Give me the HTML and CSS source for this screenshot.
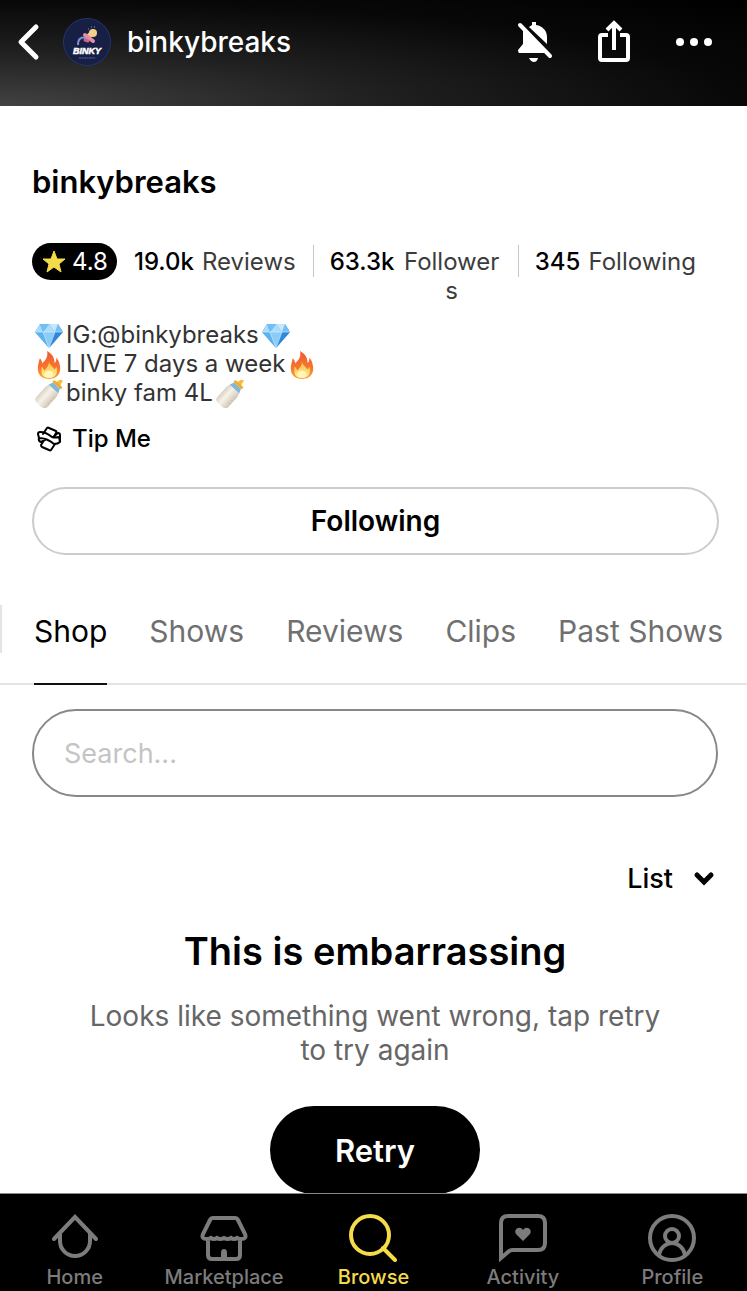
FILE: index.html
```html
<!DOCTYPE html>
<html lang="en">
<head>
<meta charset="utf-8">
<meta name="viewport" content="width=device-width, initial-scale=1">
<title>binkybreaks</title>
<link rel="stylesheet" href="styles.css">
</head>
<body>
<svg class="symbols" aria-hidden="true">
  <defs>
    <linearGradient id="flame" x1="0" y1="0" x2="0" y2="1"><stop offset="0" stop-color="#ee5a32"/><stop offset=".6" stop-color="#f8752e"/><stop offset="1" stop-color="#fda63a"/></linearGradient>
    <linearGradient id="core" x1="0" y1="0" x2="0" y2="1"><stop offset="0" stop-color="#ffb938"/><stop offset="1" stop-color="#fff3a0"/></linearGradient>
    <linearGradient id="milk" x1="0" y1="0" x2="1" y2="0"><stop offset="0" stop-color="#d9d0c2"/><stop offset=".4" stop-color="#f7f2e8"/><stop offset="1" stop-color="#d2c7b5"/></linearGradient>
  </defs>
  <symbol id="diamond" viewBox="0 0 32 28">
    <path d="M7 2h18l5 8-14 16L2 10z" fill="#4ba5ea"/>
    <path d="M7 2l-5 8h8zM16 2l-6 8h12z" fill="#a9dcfb"/>
    <path d="M7 2h9l-6 8zM25 2l5 8h-8z" fill="#72bff5"/>
    <path d="M16 2h9l-3 8z" fill="#c3e8fd"/>
    <path d="M2 10h8l6 16z" fill="#5db2f0"/>
    <path d="M10 10h12l-6 16z" fill="#8bcbf8"/>
    <path d="M22 10h8L16 26z" fill="#3187d8"/>
    <path d="M2 10h28M10 10l6 16 6-16" fill="none" stroke="#d8f1ff" stroke-width=".6"/>
  </symbol>
  <symbol id="fire" viewBox="0 0 32 30">
    <path d="M14 0c7 4 8 9 8 13 2-2 2-4 2-6 3 4 4 8 4 12 0 7-5 11-12 11S4 26 4 19c0-4 1-7 2-11 2 1 2 3 3 5 4-4 6-7 5-13z" fill="url(#flame)"/>
    <path d="M16 11c0 4 5 6 6 9l2-3c2 7-1 12-8 12S7 25 8 17c2 1 2 3 3 4 3-3 5-6 5-10z" fill="url(#core)"/>
    <ellipse cx="16" cy="25" rx="5" ry="4" fill="#fff6b8"/>
  </symbol>
  <symbol id="bottle" viewBox="0 0 32 30">
    <g transform="rotate(42 16 15)">
      <path d="M14-2c-1-5 5-5 4 0l2 4h-8z" fill="#f6bd35"/>
      <rect x="10" y="0" width="12" height="3" rx="1" fill="#f3a92c"/>
      <path d="M11 3h10l2 5H9z" fill="#83b7d5"/>
      <path d="M9 8h14l1 4v14c0 4-2 5-8 5s-8-1-8-5V12z" fill="url(#milk)"/>
      <path d="M21 15h2M21 19h2M21 23h2" stroke="#c8bdad" stroke-width="1"/>
    </g>
  </symbol>
</svg>

<header class="topbar">
  <button class="icon-button back" aria-label="Back"><svg width="24" height="38" viewBox="0 0 24 38"><path d="M20 4L5 19l15 15" class="stroke-back"/></svg></button>
  <svg class="avatar" viewBox="0 0 48 48" role="img" aria-label="Binky logo">
    <circle cx="24" cy="24" r="23.5" fill="#172044" stroke="#20366f"/>
    <path d="M15 27c0-9 7-9 10-4" fill="none" stroke="#7e91cd" stroke-width="2"/>
    <path d="M26 18l4-4" stroke="#f6cf86" stroke-width="5" stroke-linecap="round"/>
    <circle cx="30" cy="15" r="4" fill="#f6cf86"/>
    <path d="M22 17l8 6" stroke="#e68cab" stroke-width="4" stroke-linecap="round"/>
    <path d="M22 22l3 1" stroke="#cc668f" stroke-width="3" stroke-linecap="round"/>
    <path d="M25 11h1M28 9h1M31 9h1" stroke="#8594ce"/>
    <text x="24" y="36" class="logo-word">BINKY</text>
    <path d="M16 40h16" stroke="#53669a" stroke-width="1" stroke-dasharray="2 .5"/>
  </svg>
  <span class="topbar-name">binkybreaks</span>
  <div class="actions">
    <button class="icon-button" aria-label="Notifications off"><svg width="40" height="44" viewBox="0 0 40 44">
      <path d="M9 10L31 33H5q-1-1-1-3l5-6zM15 7l3-2V2h4v3c7 1 11 6 11 12v7zM15 38h9q-1 4-4 4t-5-4" fill="#fff"/><path d="M6 5l30 31" stroke="#fff" stroke-width="4" stroke-linecap="round"/>
    </svg></button>
    <button class="icon-button" aria-label="Share"><svg width="40" height="48" viewBox="0 0 40 48"><path d="M14 17H8q-2 0-2 2v21q0 2 2 2h24q2 0 2-2V19q0-2-2-2h-6" class="stroke-share"/><path d="M20 32V5M13 12l7-7 7 7" class="stroke-share"/></svg></button>
    <button class="icon-button" aria-label="More"><svg width="40" height="12" viewBox="0 0 40 12" fill="#fff"><circle cx="6" cy="6" r="4"/><circle cx="20" cy="6" r="4"/><circle cx="34" cy="6" r="4"/></svg></button>
  </div>
</header>

<main>
  <section class="profile">
    <h1>binkybreaks</h1>
    <div class="stats">
      <span class="rating"><svg width="26" height="26" viewBox="0 0 26 26"><path d="M13 2l3 8h8l-6 5 2 8-7-5-7 5 2-8-6-5h8z" fill="#f4db4a" stroke="#f4db4a" stroke-width="1" stroke-linejoin="round"/></svg>4.8</span>
      <span class="stat"><b>19.0k</b><span>Reviews</span></span>
      <span class="stat stat-wrap"><b>63.3k</b><span class="stat-label">Followers</span></span>
      <span class="stat"><b>345</b><span>Following</span></span>
    </div>
    <p class="bio">
      <svg class="emoji"><use href="#diamond"/></svg>IG:@binkybreaks<svg class="emoji"><use href="#diamond"/></svg><br>
      <svg class="emoji"><use href="#fire"/></svg>LIVE 7 days a week<svg class="emoji"><use href="#fire"/></svg><br>
      <svg class="emoji"><use href="#bottle"/></svg>binky fam 4L<svg class="emoji"><use href="#bottle"/></svg>
    </p>
    <button class="tip"><svg width="26" height="26" viewBox="0 0 26 26"><g class="stroke-tip"><path d="M7 8l4-6q1-1 2 0l7 3q1 1 0 2l-2 4"/><path d="M7 16l-2 3q0 1 1 2l7 3q1 1 2 0l4-6"/><path d="M4 6q-2 0-2 2l1 4q8 0 15 6 4 0 6-2l-1-5q-4 1-7 0-6-5-12-5zM3 12q-1 3 2 4 2-1 4-2M22 7q2 0 2 2v7M17 11l5-4"/></g></svg>Tip Me</button>
    <button class="follow">Following</button>
  </section>

  <nav class="tabs" aria-label="Profile sections">
    <a class="tab active" href="#shop" aria-current="page">Shop</a>
    <a class="tab" href="#shows">Shows</a>
    <a class="tab" href="#reviews">Reviews</a>
    <a class="tab" href="#clips">Clips</a>
    <a class="tab" href="#past">Past Shows</a>
  </nav>

  <section class="shop" id="shop">
    <input class="search" type="search" placeholder="Search..." aria-label="Search">
    <button class="view">List<svg width="24" height="18" viewBox="0 0 24 18"><path d="M5 5l7 7 7-7" class="stroke-chevron"/></svg></button>
    <div class="error">
      <h2>This is embarrassing</h2>
      <p>Looks like something went wrong, tap retry to try again</p>
      <button class="retry">Retry</button>
    </div>
  </section>
</main>

<nav class="bottom" aria-label="Main">
  <a class="item" href="#home"><svg viewBox="0 0 48 48"><path d="M3 25L24 3l21 22M9 20v7a15 15 0 0 0 30 0v-7"/></svg>Home</a>
  <a class="item" href="#marketplace"><svg viewBox="0 0 48 48"><path d="M13 4h22q2 0 3 2l7 14q2 5-4 5-3 0-4-1-3 2-6 0-3 2-7 0-4 2-7 0-3 2-6 0-1 1-4 1-6 0-4-5l7-14q1-2 3-2zM8 26v15q0 4 4 4h24q4 0 4-4V26"/><path d="M23 45v-6q0-2 1-2t1 2v6z" class="solid"/></svg>Marketplace</a>
  <a class="item current" href="#browse" aria-current="page"><svg viewBox="0 0 48 48"><circle cx="21" cy="21" r="19"/><path d="M34 34l12 12"/></svg>Browse</a>
  <a class="item" href="#activity"><svg viewBox="0 0 48 48"><path d="M2 44V9q0-7 7-7h30q7 0 7 7v20q0 7-7 7H14q-3 0-5 2z"/><path d="M24 27l-7-7c-3-5 4-9 7-4 3-5 10-1 7 4z" class="fill"/></svg>Activity</a>
  <a class="item" href="#profile"><svg viewBox="0 0 48 48"><circle cx="24" cy="24" r="22"/><circle cx="24" cy="22" r="7"/><path d="M11 41c1-7 7-12 13-12s12 5 13 12"/></svg>Profile</a>
</nav>
</body>
</html>
```
FILE: styles.css
```css
* { box-sizing: border-box; }
body { margin: 0; min-height: 100vh; display: flex; flex-direction: column; background: #fff; color: #000; font-family: Inter, "Liberation Sans", sans-serif; }
button { border: 0; background: none; padding: 0; color: inherit; font: inherit; cursor: pointer; }
a { color: inherit; text-decoration: none; }
svg { display: block; flex: none; }
h1, h2, p { margin: 0; }
main { flex: 1; }
.symbols { position: absolute; width: 0; height: 0; }

.topbar { height: 106px; padding: 0 33px 22px 16px; display: flex; align-items: center; color: #fff; background: radial-gradient(ellipse at 0 100%, #424242 0, #202020 36%, #080808 70%, #000 100%); }
.back { width: 47px; }
.avatar { width: 48px; height: 48px; }
.logo-word { font: italic 700 9px "Liberation Sans", sans-serif; fill: #fff; stroke: #fff; stroke-width: .5px; text-anchor: middle; }
.topbar-name { margin-left: 16px; font-size: 28px; font-weight: 500; }
.actions { margin-left: auto; display: flex; align-items: center; gap: 40px; }
.stroke-back, .stroke-share, .stroke-chevron, .stroke-tip { fill: none; stroke: #fff; stroke-width: 5; stroke-linecap: round; stroke-linejoin: round; }
.stroke-share { stroke-width: 4; stroke-linecap: butt; stroke-linejoin: miter; }
.stroke-chevron { stroke: #000; stroke-linejoin: miter; }
.stroke-tip { stroke: #000; stroke-width: 2; }

.profile { padding: 56px 28px 0 32px; }
h1 { font-size: 31px; line-height: 40px; font-weight: 600; }
.stats { margin-top: 41px; padding-right: 6px; display: flex; align-items: flex-start; font-size: 24px; line-height: 29px; color: #3c3c3c; }
.rating { flex: none; height: 37px; padding: 0 9px; display: flex; align-items: center; gap: 5px; border-radius: 19px; background: #000; color: #fff; }
.stat { flex: none; display: flex; gap: 8px; margin-top: 4px; padding: 0 17px; position: relative; text-align: center; white-space: nowrap; }
.stat b { font-weight: 500; color: #000; }
.stat + .stat::before { content: ""; position: absolute; left: 0; top: -2px; width: 1px; height: 32px; background: #c8c8c8; }
.stat-wrap { flex: 0 1 auto; min-width: 0; }
.stat-label { flex: 0 1 auto; min-width: 0; white-space: normal; overflow-wrap: anywhere; }
.bio { margin-top: 15px; font-size: 24px; line-height: 29px; color: #333; }
.emoji { display: inline-block; width: 32px; height: 28px; vertical-align: -5px; margin: -2px 1px; }
.tip { margin: 17px 0 0 4px; display: flex; align-items: center; gap: 10px; font-size: 24px; line-height: 29px; font-weight: 500; }
.follow { display: block; width: 100%; height: 68px; margin-top: 34px; border: 2px solid #ccc; border-radius: 34px; font-size: 28px; font-weight: 600; }

.tabs { margin-top: 50px; padding-left: 34px; display: flex; gap: 42px; font-size: 30px; line-height: 52px; color: #707070; border-bottom: 2px solid #e4e4e4; background: linear-gradient(#e4e4e4, #e4e4e4) 0 0 / 2px 48px no-repeat; }
.tab { flex: none; height: 78px; white-space: nowrap; }
.active { color: #000; box-shadow: 0 2px #111; }

.shop { padding: 24px 29px 0 32px; display: flex; flex-direction: column; }
.search { width: 100%; height: 88px; padding: 0 30px; border: 2px solid #888; border-radius: 44px; font: 27px Inter, "Liberation Sans", sans-serif; background: #fff; appearance: none; }
.search::placeholder { color: #c4c4c4; opacity: 1; }
.view { align-self: flex-end; margin: 65px 2px 0 0; display: flex; align-items: center; gap: 19px; font-size: 27px; line-height: 34px; font-weight: 500; }
.error { margin-top: 31px; display: flex; flex-direction: column; align-items: center; text-align: center; }
h2 { font-size: 38px; line-height: 48px; font-weight: 600; }
.error p { max-width: 590px; margin-top: 24px; font-size: 28px; line-height: 34px; color: #666; }
.retry { width: 210px; height: 88px; margin: 39px 0 -1px; border-radius: 44px; background: #000; color: #fff; font-size: 31px; font-weight: 600; }

.bottom { height: 98px; padding-top: 20px; display: grid; grid-template-columns: repeat(5, 1fr); border-top: 1px solid #888; background: #000; color: #7c7c7c; }
.item { display: flex; flex-direction: column; align-items: center; gap: 3px; font-size: 20px; line-height: 24px; font-weight: 500; }
.item svg { width: 48px; height: 48px; fill: none; stroke: currentColor; stroke-width: 4; stroke-linecap: round; }
.item .solid { fill: currentColor; }
.item .fill { fill: currentColor; stroke: none; }
.current { color: #f4db4a; }
```
